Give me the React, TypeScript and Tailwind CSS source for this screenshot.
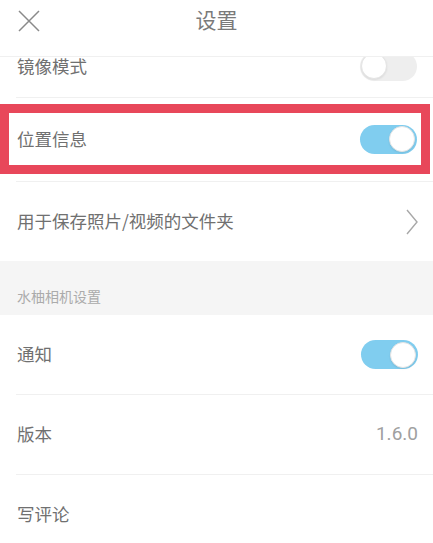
import React from 'react';

const font = { fontFamily: '"Noto Sans CJK SC", "Noto Sans", sans-serif' };

function Toggle({ on }: { on: boolean }) {
  return (
    <div
      className={
        on
          ? 'w-[57px] h-[29px] rounded-full bg-[#80cdef] flex items-center justify-end pr-[2px]'
          : 'w-[57px] h-[29px] rounded-full bg-[#eeeeee] flex items-center justify-start pl-[1px]'
      }
    >
      <div className="w-[26px] h-[26px] rounded-full bg-white border border-[#e4e4e4] shadow-[0_1px_2px_rgba(0,0,0,0.08)]" />
    </div>
  );
}

function Divider() {
  return <div className="ml-[16px] h-px bg-[#f0f0f0]" />;
}

function Row({ label, children }: { label: string; children?: React.ReactNode }) {
  return (
    <div className="h-[79px] flex items-center justify-between pl-[17px] pr-[15px]">
      <span className="text-[17.5px] text-[#707070]">{label}</span>
      {children}
    </div>
  );
}

export default function App() {
  return (
    <div className="w-[433px] h-[543px] bg-white overflow-hidden flex flex-col" style={font}>
      {/* Kopfzeile */}
      <div className="relative h-[57px] shrink-0 flex items-center justify-center border-b border-[#f0f0f0] bg-white z-10">
        <svg className="absolute left-[18px] top-[10px]" width="22" height="22" viewBox="0 0 22 22">
          <path d="M1 1 L21 21 M21 1 L1 21" stroke="#8a8a8a" strokeWidth="1.5" fill="none" />
        </svg>
        <span className="text-[21px] text-[#7a7a7a] -mt-[17px]">设置</span>
      </div>

      <div className="flex-1 overflow-hidden">
        {/* teilweise verdeckte Zeile */}
        <div className="h-[62px] -mt-[22px] flex items-center justify-between pl-[17px] pr-[16px]">
          <span className="text-[17.5px] text-[#707070]">镜像模式</span>
          <Toggle on={false} />
        </div>
        <Divider />

        {/* markierte Zeile */}
        <div className="pt-[6px] pb-[7px]">
          <div className="w-[430px] h-[70px] border-[9px] border-[#e8475a] flex items-center justify-between pl-[8px] pr-[4px]">
            <span className="text-[17.5px] text-[#707070]">位置信息</span>
            <Toggle on={true} />
          </div>
        </div>
        <Divider />

        <Row label="用于保存照片/视频的文件夹">
          <svg width="12" height="26" viewBox="0 0 12 26">
            <path d="M1 1 L11 13 L1 25" stroke="#a8a8a8" strokeWidth="1.4" fill="none" />
          </svg>
        </Row>

        <div className="h-[54px] bg-[#f5f5f5] pl-[17px] pt-[22px]">
          <span className="text-[14px] text-[#ababab]">水柚相机设置</span>
        </div>

        <Row label="通知">
          <Toggle on={true} />
        </Row>
        <Divider />
        <Row label="版本">
          <span className="text-[19px] text-[#a0a0a0]" style={{ fontFamily: 'Roboto, sans-serif' }}>
            1.6.0
          </span>
        </Row>
        <Divider />
        <Row label="写评论" />
      </div>
    </div>
  );
}
